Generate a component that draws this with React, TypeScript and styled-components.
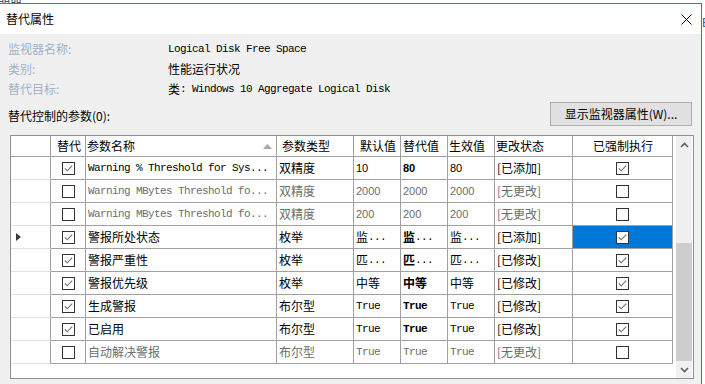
import React from 'react';
import styled, { createGlobalStyle } from 'styled-components';

const CJK = `"Noto Sans CJK SC", "Microsoft YaHei", sans-serif`;
const MONO = `"Liberation Mono", "Noto Sans CJK SC", monospace`;
const SANS = `"Liberation Sans", "Noto Sans CJK SC", sans-serif`;

const Global = createGlobalStyle`
  html, body { margin: 0; padding: 0; background: #fff; }
  body { width: 705px; height: 384px; overflow: hidden; font-family: ${CJK}; }
  * { box-sizing: border-box; }
`;

const Screen = styled.div`
  width: 705px;
  height: 384px;
  overflow: hidden;
  display: flex;
  flex-direction: column;
  background: #fff;
`;

const BackStrip = styled.div`
  height: 3px;
  overflow: hidden;
  font: 12px/12px ${CJK};
  color: #1d3f7a;
`;

const BackText = styled.div`
  margin-top: -9px;
  margin-left: -2px;
`;

const Body = styled.div`
  display: flex;
  flex: 1;
  min-height: 0;
`;

const Dialog = styled.div`
  width: 702px;
  flex: none;
  border-top: 1px solid #2b7bd6;
  border-right: 1px solid #2b7bd6;
  display: flex;
  flex-direction: column;
  background: #f0f0f0;
`;

const Sliver = styled.div`
  flex: 1;
  background: #fff;
  font: 12px/12px ${SANS};
  color: #2a62b8;
  overflow: hidden;
  padding-top: 14px;
`;

const TitleBar = styled.div`
  height: 30px;
  flex: none;
  background: #fff;
  display: flex;
  align-items: center;
  justify-content: space-between;
  padding: 0 9px 0 6px;
`;

const Title = styled.span`
  font: 12px/16px ${CJK};
  color: #000;
`;

const Content = styled.div`
  flex: 1;
  padding: 5px 9px 0 8px;
  display: flex;
  flex-direction: column;
`;

const InfoGrid = styled.div`
  display: grid;
  grid-template-columns: 160px 1fr;
  grid-auto-rows: 20px;
  align-items: center;
`;

const InfoLabel = styled.span`
  font: 12px/16px ${CJK};
  color: #9fb0c8;
`;

const InfoValue = styled.span`
  color: #000;
  white-space: pre;
  display: flex;
  align-items: center;
`;

const Cjk = styled.span<{ $bold?: boolean }>`
  font: ${(p) => (p.$bold ? 700 : 400)} 12px/16px ${CJK};
`;

const Mono = styled.span<{ $bold?: boolean }>`
  font: ${(p) => (p.$bold ? 700 : 400)} 11px/16px ${MONO};
  letter-spacing: -0.6px;
  white-space: pre;
`;

const Num = styled.span<{ $bold?: boolean }>`
  font: ${(p) => (p.$bold ? 700 : 400)} 11px/16px ${SANS};
`;

const ParamBar = styled.div`
  margin-top: 3px;
  display: flex;
  justify-content: space-between;
  align-items: flex-end;
`;

const ParamLabel = styled.span`
  font: 12px/16px ${CJK};
  color: #000;
  margin-bottom: 2px;
`;

const Button = styled.button`
  width: 142px;
  height: 24px;
  margin: 0;
  padding: 0;
  background: #e1e1e1;
  border: 1px solid #adadad;
  font: 12px/16px ${CJK};
  color: #000;
`;

const Grid = styled.div`
  margin: 9px 0 0 2px;
  width: 684px;
  height: 244px;
  border: 1px solid #8e8f94;
  display: flex;
  background: #fff;
`;

const Table = styled.div`
  width: 662px;
  flex: none;
  display: grid;
  grid-template-columns: 40px 35px 191px 77px 47px 47px 47px 78px 100px;
  grid-auto-rows: 23px;
  grid-template-rows: 21px;
  align-content: start;
`;

const HeadCell = styled.div<{ $pad?: number }>`
  border-right: 1px solid #a0a0a0;
  border-bottom: 1px solid #a0a0a0;
  display: flex;
  align-items: center;
  padding-left: ${(p) => p.$pad ?? 1}px;
  padding-right: 4px;
  font: 12px/16px ${CJK};
  color: #000;
  white-space: nowrap;
  overflow: hidden;
`;

const SortGlyph = styled.svg`
  margin-left: auto;
  display: block;
`;

const RowHead = styled.div`
  border-right: 1px solid #a0a0a0;
  border-bottom: 1px solid #e3e3e3;
  display: flex;
  align-items: center;
  padding-left: 5px;
`;

const Cell = styled.div<{ $gray?: boolean; $center?: boolean; $selected?: boolean }>`
  border-right: 1px solid #a0a0a0;
  border-bottom: 1px solid #a0a0a0;
  display: flex;
  align-items: center;
  justify-content: ${(p) => (p.$center ? 'center' : 'flex-start')};
  padding-left: ${(p) => (p.$center ? 0 : 2)}px;
  color: ${(p) => (p.$gray ? '#6d6d6d' : '#000')};
  background: ${(p) => (p.$selected ? '#0078d7' : 'transparent')};
  white-space: nowrap;
  overflow: hidden;
`;

const ScrollArea = styled.div`
  flex: 1;
  display: flex;
  padding: 0 1px 0 3px;
`;

const Scrollbar = styled.div`
  width: 16px;
  background: #f0f0f0;
  display: flex;
  flex-direction: column;
`;

const ScrollBtn = styled.div`
  height: 17px;
  flex: none;
  display: flex;
  align-items: center;
  justify-content: center;
`;

const Track = styled.div`
  flex: 1;
  display: flex;
  flex-direction: column;
  justify-content: flex-end;
`;

const Thumb = styled.div`
  height: 118px;
  background: #cdcdcd;
`;

const CloseIcon = () => (
  <svg width="11" height="11" viewBox="0 0 11 11">
    <path d="M0.5 0.5 L10.5 10.5 M10.5 0.5 L0.5 10.5" stroke="#000" strokeWidth="1" fill="none" />
  </svg>
);

const Check = ({ on }: { on: boolean }) => (
  <svg width="13" height="13" viewBox="0 0 13 13" style={{ display: 'block' }}>
    <rect x="0.5" y="0.5" width="12" height="12" fill="#fff" stroke="#333" />
    {on && <path d="M2.8 6.3 L5.2 8.8 L10.2 3.6" fill="none" stroke="#6f6f6f" strokeWidth="1.1" />}
  </svg>
);

const Chevron = ({ up }: { up: boolean }) => (
  <svg width="9" height="6" viewBox="0 0 9 6" style={{ display: 'block' }}>
    <path d={up ? 'M1 5 L4.5 1.5 L8 5' : 'M1 1 L4.5 4.5 L8 1'} fill="none" stroke="#606060" strokeWidth="1.6" />
  </svg>
);

const RowArrow = () => (
  <svg width="5" height="8" viewBox="0 0 5 8" style={{ display: 'block' }}>
    <polygon points="0,0 5,4 0,8" fill="#3a3a3a" />
  </svg>
);

type V = { t: 'cjk' | 'mono' | 'num' | 'ell'; s: string };

type Row = {
  on: boolean;
  name: V;
  type: string;
  def: V;
  ovr: V;
  eff: V;
  status: string;
  forced: boolean;
  gray?: boolean;
  current?: boolean;
};

const rows: Row[] = [
  { on: true, name: { t: 'mono', s: 'Warning % Threshold for Sys...' }, type: '双精度', def: { t: 'num', s: '10' }, ovr: { t: 'num', s: '80' }, eff: { t: 'num', s: '80' }, status: '[已添加]', forced: true },
  { on: false, name: { t: 'mono', s: 'Warning MBytes Threshold fo...' }, type: '双精度', def: { t: 'num', s: '2000' }, ovr: { t: 'num', s: '2000' }, eff: { t: 'num', s: '2000' }, status: '[无更改]', forced: false, gray: true },
  { on: false, name: { t: 'mono', s: 'Warning MBytes Threshold fo...' }, type: '双精度', def: { t: 'num', s: '200' }, ovr: { t: 'num', s: '200' }, eff: { t: 'num', s: '200' }, status: '[无更改]', forced: false, gray: true },
  { on: true, name: { t: 'cjk', s: '警报所处状态' }, type: '枚举', def: { t: 'ell', s: '监' }, ovr: { t: 'ell', s: '监' }, eff: { t: 'ell', s: '监' }, status: '[已添加]', forced: true, current: true },
  { on: true, name: { t: 'cjk', s: '警报严重性' }, type: '枚举', def: { t: 'ell', s: '匹' }, ovr: { t: 'ell', s: '匹' }, eff: { t: 'ell', s: '匹' }, status: '[已修改]', forced: true },
  { on: true, name: { t: 'cjk', s: '警报优先级' }, type: '枚举', def: { t: 'cjk', s: '中等' }, ovr: { t: 'cjk', s: '中等' }, eff: { t: 'cjk', s: '中等' }, status: '[已修改]', forced: true },
  { on: true, name: { t: 'cjk', s: '生成警报' }, type: '布尔型', def: { t: 'mono', s: 'True' }, ovr: { t: 'mono', s: 'True' }, eff: { t: 'mono', s: 'True' }, status: '[已修改]', forced: true },
  { on: true, name: { t: 'cjk', s: '已启用' }, type: '布尔型', def: { t: 'mono', s: 'True' }, ovr: { t: 'mono', s: 'True' }, eff: { t: 'mono', s: 'True' }, status: '[已修改]', forced: true },
  { on: false, name: { t: 'cjk', s: '自动解决警报' }, type: '布尔型', def: { t: 'mono', s: 'True' }, ovr: { t: 'mono', s: 'True' }, eff: { t: 'mono', s: 'True' }, status: '[无更改]', forced: false, gray: true },
];

const Val = ({ v, bold }: { v: V; bold?: boolean }) => {
  if (v.t === 'cjk') return <Cjk $bold={bold}>{v.s}</Cjk>;
  if (v.t === 'mono') return <Mono $bold={bold}>{v.s}</Mono>;
  if (v.t === 'num') return <Num $bold={bold}>{v.s}</Num>;
  return (
    <>
      <Cjk $bold={bold}>{v.s}</Cjk>
      <Mono>...</Mono>
    </>
  );
};

export default function App() {
  return (
    <>
      <Global />
      <Screen>
        <BackStrip>
          <BackText>品器</BackText>
        </BackStrip>
        <Body>
          <Dialog>
            <TitleBar>
              <Title>替代属性</Title>
              <CloseIcon />
            </TitleBar>
            <Content>
              <InfoGrid>
                <InfoLabel>监视器名称:</InfoLabel>
                <InfoValue>
                  <Mono>Logical Disk Free Space</Mono>
                </InfoValue>
                <InfoLabel>类别:</InfoLabel>
                <InfoValue>
                  <Cjk>性能运行状况</Cjk>
                </InfoValue>
                <InfoLabel>替代目标:</InfoLabel>
                <InfoValue>
                  <Cjk>类</Cjk>
                  <Mono>: Windows 10 Aggregate Logical Disk</Mono>
                </InfoValue>
              </InfoGrid>
              <ParamBar>
                <ParamLabel>替代控制的参数(0):</ParamLabel>
                <Button>显示监视器属性(W)...</Button>
              </ParamBar>
              <Grid>
                <Table>
                  <HeadCell />
                  <HeadCell $pad={6}>替代</HeadCell>
                  <HeadCell $pad={1}>
                    参数名称
                    <SortGlyph width="9" height="5" viewBox="0 0 9 5">
                      <polygon points="0,5 4.5,0 9,5" fill="#a8a8a8" />
                    </SortGlyph>
                  </HeadCell>
                  <HeadCell $pad={5}>参数类型</HeadCell>
                  <HeadCell $pad={6}>默认值</HeadCell>
                  <HeadCell $pad={2}>替代值</HeadCell>
                  <HeadCell $pad={1}>生效值</HeadCell>
                  <HeadCell $pad={1}>更改状态</HeadCell>
                  <HeadCell $pad={20}>已强制执行</HeadCell>
                  {rows.map((r, i) => (
                    <React.Fragment key={i}>
                      <RowHead>{r.current && <RowArrow />}</RowHead>
                      <Cell $center>
                        <Check on={r.on} />
                      </Cell>
                      <Cell $gray={r.gray}>
                        <Val v={r.name} />
                      </Cell>
                      <Cell $gray={r.gray}>
                        <Cjk>{r.type}</Cjk>
                      </Cell>
                      <Cell $gray={r.gray}>
                        <Val v={r.def} />
                      </Cell>
                      <Cell $gray={r.gray}>
                        <Val v={r.ovr} bold={!r.gray} />
                      </Cell>
                      <Cell $gray={r.gray}>
                        <Val v={r.eff} />
                      </Cell>
                      <Cell $gray={r.gray}>
                        <Cjk>{r.status}</Cjk>
                      </Cell>
                      <Cell $center $selected={r.current}>
                        <Check on={r.forced} />
                      </Cell>
                    </React.Fragment>
                  ))}
                </Table>
                <ScrollArea>
                  <Scrollbar>
                    <ScrollBtn>
                      <Chevron up />
                    </ScrollBtn>
                    <Track>
                      <Thumb />
                    </Track>
                    <ScrollBtn>
                      <Chevron up={false} />
                    </ScrollBtn>
                  </Scrollbar>
                </ScrollArea>
              </Grid>
            </Content>
          </Dialog>
          <Sliver>E</Sliver>
        </Body>
      </Screen>
    </>
  );
}
